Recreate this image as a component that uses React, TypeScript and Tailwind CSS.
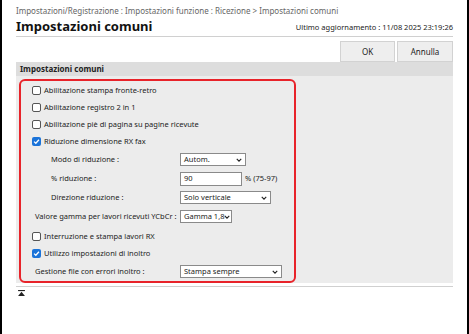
import { useState } from 'react';

const font = { fontFamily: '"Noto Sans", "Liberation Sans", sans-serif' };

function Check({ checked, label }: { checked?: boolean; label: string }) {
  return (
    <label className="flex items-center h-[17px] gap-[3px] pl-[11px]">
      {checked ? (
        <span className="w-[9px] h-[9px] rounded-[2px] bg-[#1a73d9] flex items-center justify-center">
          <svg viewBox="0 0 10 10" className="w-[7px] h-[7px]">
            <path d="M1.5 5.2 L4 7.5 L8.5 2.5" fill="none" stroke="white" strokeWidth={1.8} />
          </svg>
        </span>
      ) : (
        <span className="w-[9px] h-[9px] rounded-[2px] border border-[#555] bg-white" />
      )}
      <span>{label}</span>
    </label>
  );
}

function Select({ value, width }: { value: string; width: string }) {
  return (
    <div className={`${width} h-[13px] border border-[#8a8a8a] bg-white flex items-center justify-between pl-[3px] pr-[3px] whitespace-nowrap`}>
      <span>{value}</span>
      <svg viewBox="0 0 8 5" className="w-[6px] h-[4px] shrink-0">
        <path d="M1 1 L4 4 L7 1" fill="none" stroke="#222" strokeWidth={1.5} />
      </svg>
    </div>
  );
}

function Row({ label, indent, children }: { label: string; indent: string; children: React.ReactNode }) {
  return (
    <div className="flex items-center h-[19px] whitespace-nowrap">
      <div className={`w-[159px] shrink-0 ${indent}`}>{label}</div>
      {children}
    </div>
  );
}

export default function App() {
  const [ok] = useState(true);
  return (
    <div style={font} className="w-[469px] h-[334px] bg-white border-l-2 border-r-2 border-black text-[#333] overflow-hidden">
      <div className="px-[14px] pt-[5px]">
        <div className="text-[8px] text-[#666] h-[12px] leading-[12px] whitespace-nowrap">
          Impostazioni/Registrazione : Impostazioni funzione : Ricezione &gt; Impostazioni comuni
        </div>
        <div className="flex items-end justify-between h-[20px] pb-[2px] border-b border-[#d0d0d0]">
          <div className="text-[13px] font-bold text-[#111] leading-[16px]">Impostazioni comuni</div>
          <div className="text-[7.5px] text-[#222] leading-[12px] pb-[1px]">Ultimo aggiornamento : 11/08 2025 23:19:26</div>
        </div>
        <div className="flex justify-end gap-[2px] pt-[4px]">
          <button className="w-[55px] h-[21px] bg-[#eeeeee] border border-[#d2d2d2] text-[8px] text-[#222]">{ok ? 'OK' : ''}</button>
          <button className="w-[56px] h-[21px] bg-[#eeeeee] border border-[#d2d2d2] text-[8px] text-[#222]">Annulla</button>
        </div>
        <div className="bg-[#ececec] text-[7.5px] text-[#222]">
          <div className="h-[14px] bg-[#dddddd] font-bold flex items-center pl-[4px] text-[8px]">Impostazioni comuni</div>
          <div className="pl-[3px] pt-[3px]">
            <div className="w-[277px] border-2 border-[#e8232a] rounded-[6px] pt-[1px]">
              <Check label="Abilitazione stampa fronte-retro" />
              <Check label="Abilitazione registro 2 in 1" />
              <Check label="Abilitazione piè di pagina su pagine ricevute" />
              <Check checked label="Riduzione dimensione RX fax" />
              <Row label="Modo di riduzione :" indent="pl-[30px]">
                <Select value="Autom." width="w-[66px]" />
              </Row>
              <Row label="% riduzione :" indent="pl-[30px]">
                <div className="w-[62px] h-[14px] border border-[#8a8a8a] bg-white pl-[3px] flex items-center">90</div>
                <span className="ml-[3px]">% (75-97)</span>
              </Row>
              <Row label="Direzione riduzione :" indent="pl-[30px]">
                <Select value="Solo verticale" width="w-[91px]" />
              </Row>
              <Row label="Valore gamma per lavori ricevuti YCbCr :" indent="pl-[14px]">
                <Select value="Gamma 1,8" width="w-[52px]" />
              </Row>
              <div className="h-[2px]" />
              <Check label="Interruzione e stampa lavori RX" />
              <Check checked label="Utilizzo impostazioni di inoltro" />
              <Row label="Gestione file con errori inoltro :" indent="pl-[14px]">
                <Select value="Stampa sempre" width="w-[102px]" />
              </Row>
            </div>
          </div>
        </div>
        <div className="border-t border-[#d0d0d0] mt-[3px] pt-[3px] pl-[2px]">
          <svg viewBox="0 0 8 7" className="w-[7px] h-[6px]">
            <rect x="0" y="0" width="8" height="1.3" fill="#222" />
            <path d="M4 2 L8 7 L0 7 Z" fill="#222" />
          </svg>
        </div>
      </div>
    </div>
  );
}
